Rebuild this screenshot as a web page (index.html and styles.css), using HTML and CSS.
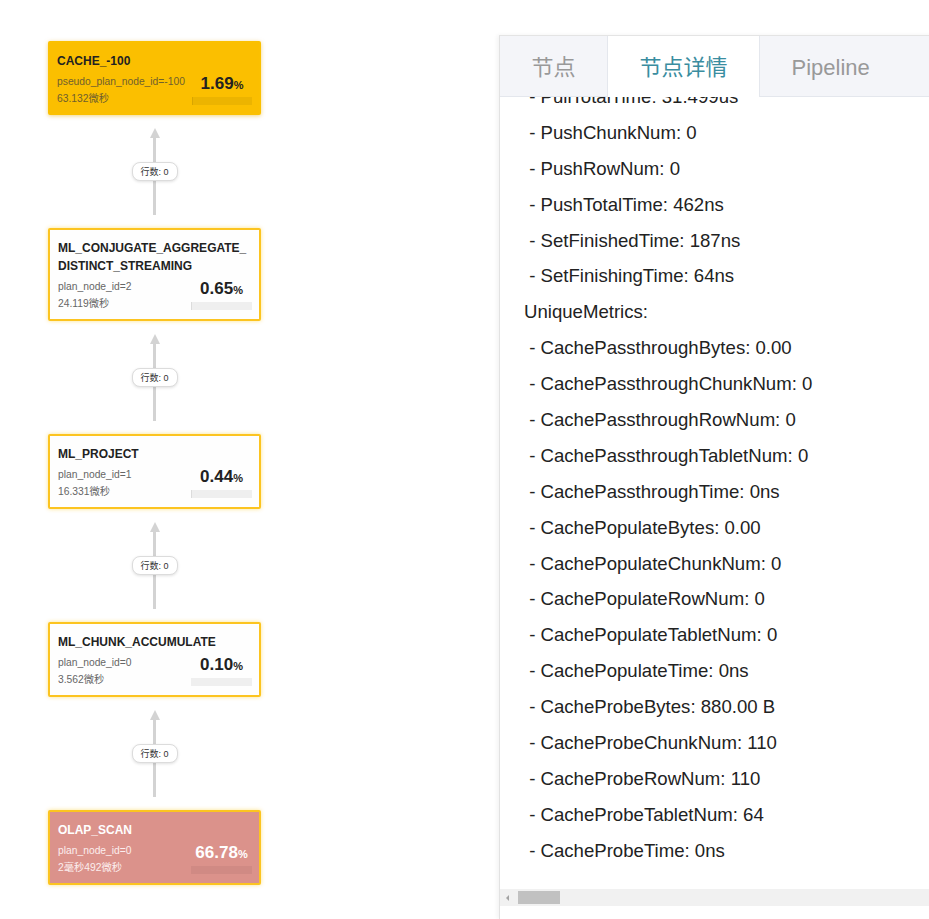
FILE: index.html
```html
<!DOCTYPE html>
<html lang="zh">
<head>
<meta charset="utf-8">
<title>Profile</title>
<link rel="stylesheet" href="styles.css">
</head>
<body>
<div class="page">
  <div class="canvas">
    <div class="graph">
      <div class="node node-hot">
        <div class="node-title">CACHE_-100</div>
        <div class="node-body">
          <div class="node-info">
            <div>pseudo_plan_node_id=-100</div>
            <div>63.132微秒</div>
          </div>
          <div class="node-pct">
            <div class="pct"><b>1.69</b><span>%</span></div>
            <div class="bar"><div class="bar-fill" style="width:1.69%"></div></div>
          </div>
        </div>
      </div>
      <div class="edge"><div class="arrow"></div><div class="line"></div><div class="edge-label">行数: 0</div></div>
      <div class="node">
        <div class="node-title">ML_CONJUGATE_AGGREGATE_<br>DISTINCT_STREAMING</div>
        <div class="node-body">
          <div class="node-info">
            <div>plan_node_id=2</div>
            <div>24.119微秒</div>
          </div>
          <div class="node-pct">
            <div class="pct"><b>0.65</b><span>%</span></div>
            <div class="bar"><div class="bar-fill" style="width:0.65%"></div></div>
          </div>
        </div>
      </div>
      <div class="edge"><div class="arrow"></div><div class="line"></div><div class="edge-label">行数: 0</div></div>
      <div class="node">
        <div class="node-title">ML_PROJECT</div>
        <div class="node-body">
          <div class="node-info">
            <div>plan_node_id=1</div>
            <div>16.331微秒</div>
          </div>
          <div class="node-pct">
            <div class="pct"><b>0.44</b><span>%</span></div>
            <div class="bar"><div class="bar-fill" style="width:0.44%"></div></div>
          </div>
        </div>
      </div>
      <div class="edge"><div class="arrow"></div><div class="line"></div><div class="edge-label">行数: 0</div></div>
      <div class="node">
        <div class="node-title">ML_CHUNK_ACCUMULATE</div>
        <div class="node-body">
          <div class="node-info">
            <div>plan_node_id=0</div>
            <div>3.562微秒</div>
          </div>
          <div class="node-pct">
            <div class="pct"><b>0.10</b><span>%</span></div>
            <div class="bar"><div class="bar-fill" style="width:0.10%"></div></div>
          </div>
        </div>
      </div>
      <div class="edge"><div class="arrow"></div><div class="line"></div><div class="edge-label">行数: 0</div></div>
      <div class="node node-scan">
        <div class="node-title">OLAP_SCAN</div>
        <div class="node-body">
          <div class="node-info">
            <div>plan_node_id=0</div>
            <div>2毫秒492微秒</div>
          </div>
          <div class="node-pct">
            <div class="pct"><b>66.78</b><span>%</span></div>
            <div class="bar"><div class="bar-fill" style="width:0%"></div></div>
          </div>
        </div>
      </div>
    </div>
  </div>
  <div class="panel">
    <div class="tabs">
      <div class="tab">节点</div>
      <div class="tab tab-active">节点详情</div>
      <div class="tab tab-last">Pipeline</div>
      <div class="tab-rest"></div>
    </div>
    <div class="detail">
      <div class="detail-list">
        <div class="row"> - PullTotalTime: 31.499us</div>
        <div class="row"> - PushChunkNum: 0</div>
        <div class="row"> - PushRowNum: 0</div>
        <div class="row"> - PushTotalTime: 462ns</div>
        <div class="row"> - SetFinishedTime: 187ns</div>
        <div class="row"> - SetFinishingTime: 64ns</div>
        <div class="row">UniqueMetrics:</div>
        <div class="row"> - CachePassthroughBytes: 0.00</div>
        <div class="row"> - CachePassthroughChunkNum: 0</div>
        <div class="row"> - CachePassthroughRowNum: 0</div>
        <div class="row"> - CachePassthroughTabletNum: 0</div>
        <div class="row"> - CachePassthroughTime: 0ns</div>
        <div class="row"> - CachePopulateBytes: 0.00</div>
        <div class="row"> - CachePopulateChunkNum: 0</div>
        <div class="row"> - CachePopulateRowNum: 0</div>
        <div class="row"> - CachePopulateTabletNum: 0</div>
        <div class="row"> - CachePopulateTime: 0ns</div>
        <div class="row"> - CacheProbeBytes: 880.00 B</div>
        <div class="row"> - CacheProbeChunkNum: 110</div>
        <div class="row"> - CacheProbeRowNum: 110</div>
        <div class="row"> - CacheProbeTabletNum: 64</div>
        <div class="row"> - CacheProbeTime: 0ns</div>
      </div>
    </div>
    <div class="hscroll">
      <div class="hscroll-arrow"></div>
      <div class="hscroll-thumb"></div>
    </div>
    <div class="panel-foot"></div>
  </div>
</div>
</body>
</html>
```

FILE: styles.css
```css
html, body {
  margin: 0;
  padding: 0;
  background: #fff;
  overflow: hidden;
}
body {
  font-family: "Liberation Sans", Arial, "Noto Sans CJK SC", sans-serif;
  color: #222;
  width: 929px;
  height: 919px;
}
.page {
  display: flex;
  height: 919px;
}
.canvas {
  width: 499px;
  flex: none;
  padding: 41px 0 0 48px;
  box-sizing: border-box;
}
.graph {
  width: 213px;
  display: flex;
  flex-direction: column;
}
.node {
  box-sizing: border-box;
  background: #fefefe;
  border: 2px solid #fcc420;
  border-radius: 2px;
  box-shadow: 0 0 4px rgba(251, 192, 0, 0.45);
  padding: 9px 7px 7px 8px;
}
.node-hot {
  background: #fbbf00;
  border-color: #fbc000;
  box-shadow: 0 1px 4px rgba(230, 170, 0, 0.5);
  padding: 9px 7px 6px 7px;
}
.node-scan {
  background: #db928b;
  color: #fff;
}
.node-title {
  font-size: 12px;
  font-weight: bold;
  line-height: 18px;
  color: #222;
}
.node-scan .node-title { color: #fff; }
.node-body {
  display: flex;
  justify-content: space-between;
  margin-top: 3px;
}
.node-info {
  font-size: 10.3px;
  line-height: 17px;
  color: #666;
}
.node-hot .node-info { color: #70602e; }
.node-scan .node-info { color: #fbeeee; }
.node-pct {
  width: 61px;
  flex: none;
  display: flex;
  flex-direction: column;
  align-items: center;
}
.node-hot .node-pct { width: 60px; }
.pct {
  line-height: 22px;
  height: 22px;
  color: #222;
}
.node-scan .pct { color: #fff; }
.pct b {
  font-size: 17px;
  font-weight: bold;
}
.pct span {
  font-size: 11px;
  font-weight: bold;
}
.bar {
  width: 100%;
  height: 8px;
  margin-top: 2px;
  background: #efefef;
}
.node-hot .bar { background: #ecb400; }
.node-scan .bar { background: #d08a84; }
.bar-fill {
  height: 100%;
  background: rgba(0, 0, 0, 0.08);
}
.edge {
  height: 113px;
  position: relative;
  display: flex;
  flex-direction: column;
  align-items: center;
  padding: 13px 0;
  box-sizing: border-box;
}
.arrow {
  width: 0;
  height: 0;
  border-left: 5px solid transparent;
  border-right: 5px solid transparent;
  border-bottom: 10px solid #d3d3d3;
  flex: none;
}
.line {
  width: 3px;
  flex: 1;
  background: #d3d3d3;
}
.edge-label {
  position: absolute;
  left: 50%;
  top: 47px;
  transform: translateX(-50%);
  height: 19px;
  line-height: 18px;
  box-sizing: border-box;
  padding: 0 8px;
  border: 1px solid #dcdcdc;
  border-radius: 8px;
  background: #fff;
  box-shadow: 0 1px 3px rgba(0, 0, 0, 0.12);
  font-size: 9px;
  color: #333;
  white-space: nowrap;
}
.panel {
  flex: none;
  width: 520px;
  margin-top: 35px;
  border-top: 1px solid #e4e4e4;
  border-left: 1px solid #e2e2e2;
  box-shadow: -2px 0 4px rgba(0, 0, 0, 0.05);
  display: flex;
  flex-direction: column;
  height: 884px;
  box-sizing: border-box;
}
.tabs {
  display: flex;
  height: 61px;
  flex: none;
  box-sizing: border-box;
  border-bottom: 1px solid #e4e7ed;
  background: #fff;
}
.tab {
  height: 60px;
  line-height: 64px;
  padding: 0 31.5px;
  font-size: 22px;
  color: #999;
  background: #f4f5f9;
  border-right: 1px solid #e4e7ed;
  white-space: nowrap;
}
.tab-last { border-right: none; }
.tab-active {
  background: #fff;
  color: #3a8da0;
  height: 61px;
  margin-bottom: -1px;
  position: relative;
}
.tab-rest {
  flex: 1;
  background: #f4f5f9;
  height: 60px;
}
.detail {
  flex: 1;
  overflow: hidden;
}
.detail-list {
  margin-top: -18px;
  padding-left: 24px;
}
.row {
  font-size: 18.6px;
  line-height: 35.9px;
  height: 35.9px;
  white-space: pre;
  color: #222;
}
.hscroll {
  flex: none;
  height: 17px;
  background: #f1f1f1;
  display: flex;
  align-items: center;
}
.hscroll-arrow {
  width: 0;
  height: 0;
  margin-left: 6px;
  border-top: 3px solid transparent;
  border-bottom: 3px solid transparent;
  border-right: 3px solid #a3a3a3;
}
.hscroll-thumb {
  width: 42px;
  height: 13px;
  margin-left: 9px;
  background: #c1c1c1;
}
.panel-foot {
  flex: none;
  height: 13px;
}
```
